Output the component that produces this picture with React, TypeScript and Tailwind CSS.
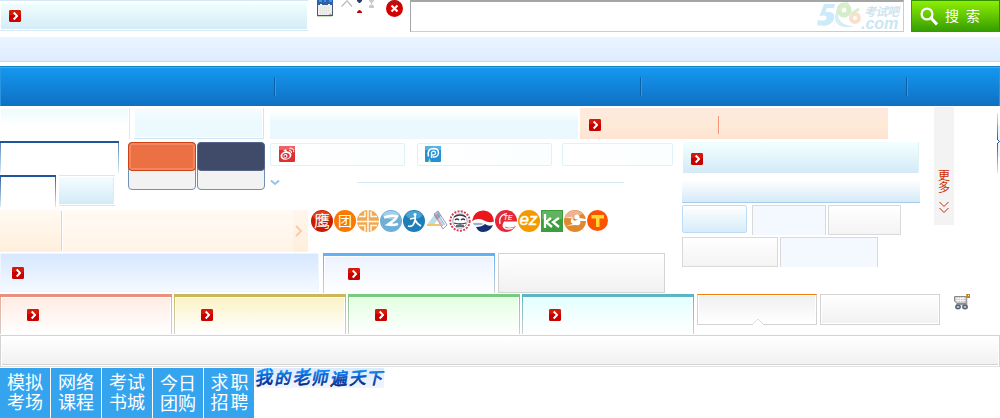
import React from "react";

const CJK = "font-['Liberation_Sans','Noto_Sans_CJK_SC',sans-serif]";

function Arrow({ className = "" }: { className?: string }) {
  return (
    <svg className={`h-3 w-3 shrink-0 ${className}`} viewBox="0 0 12 12">
      <rect width="12" height="12" rx="1.5" fill="#c90000" />
      <path d="M0 1.5Q0 0 1.5 0h9Q12 0 12 1.5V5H0z" fill="#dd2a0c" opacity=".6" />
      <path d="M4.7 2.5 8 5.9 4.7 9.5" fill="none" stroke="#fff" strokeWidth="2" />
    </svg>
  );
}

function Calendar() {
  return (
    <svg className="ml-[9px] h-[17px] w-4 shrink-0" viewBox="0 0 16 17">
      <path d="M0 4h16v12H0z" fill="#54566c" />
      <path d="M1 5h14v7l-3 3H1z" fill="#eeeeee" />
      <path d="M0 0h16v4.6H0z" fill="#2862b0" />
      <path d="M2 0h3v2H2zM7 0h2v2H7zM12 0h3v2h-3z" fill="#4493da" />
      <path d="M3 4.500h2M11 4.500h2" stroke="#fff" />
      <path d="M3 8h10M3 10.500h10M3 13h8" stroke="#dadada" strokeDasharray="1 1" />
      <path d="M12.500 14.500 15 12v2.500z" fill="#fff" />
      <path d="M0 16.500h15" stroke="#c8dcc0" />
    </svg>
  );
}

function SortMarks() {
  return (
    <svg className="ml-2 h-4 w-[34px] shrink-0" viewBox="0 0 34 16">
      <path d="M.5 6.500 6 .8l5 5.700" fill="none" stroke="#b9b9b9" strokeWidth="1.200" />
      <path d="M16 0h5v1l-2 2h-1l-2-2z" fill="#263a70" />
      <path d="M16 13v-1l2-2h1l2 2v1z" fill="#c40008" />
      <path d="M28 0h5v1l-2 2v1l2 2v2h-5V6l2-2V3l-2-2z" fill="#cacaca" />
      <path d="M28 4.500h5" stroke="#fff" strokeWidth=".5" />
    </svg>
  );
}

function Close() {
  return (
    <svg className="ml-[11px] h-[17px] w-[17px] shrink-0" viewBox="0 0 17 17">
      <circle cx="8.500" cy="8.500" r="8.500" fill="#d40000" />
      <path d="M1 5a8.500 8.500 0 0 1 15 0Q8.500 2 1 5" fill="#b01518" />
      <path d="m5.500 5.500 6 6m0-6-6 6" stroke="#fff" strokeWidth="2.200" />
    </svg>
  );
}

function Logo() {
  return (
    <div className="flex h-7">
      <svg className="h-7 w-[44px]" viewBox="0 0 44 28">
        <path d="M7 2h11l-1 4h-7l-1.500 4c7-1 10 2 8.500 7C15 23 9 25 0 23l1-5c5 1 8 1 8.500-2 .5-3-3-3-7-2z" fill="#cdeaf8" />
        <path d="M21 14c1 6 7 10 16 10-8 3-20 1-19-10 1-8 7-13 15-12-7 2-12 6-12 12z" fill="#d6eef3" />
        <circle cx="27" cy="8" r="5" fill="none" stroke="#d3edc9" strokeWidth="5" />
        <circle cx="38" cy="16" r="4" fill="none" stroke="#fadfcd" strokeWidth="4" />
        <path d="m21 8 10-7M34 12l8-5" stroke="#dceecb" strokeWidth="3" />
      </svg>
      <div className={`w-[42px] pt-1 font-bold italic ${CJK}`}>
        <div className="pl-[3px] text-[12px] leading-[13px] tracking-[-0.5px] whitespace-nowrap text-[#cfe4ed]">考试吧</div>
        <div className="text-[16px] leading-[10px] whitespace-nowrap text-[#c9e6f4]">.com</div>
      </div>
    </div>
  );
}

function Header() {
  return (
    <div className="flex h-[37px] items-start">
      <div className="flex h-[31px] w-[308px] shrink-0 flex-col justify-between border-y border-[#d5e9f5]">
        <div className="mx-px mt-[2px] flex h-[26px] items-center bg-linear-to-b from-[#f0ffff] to-[#d5ebf7] pl-2">
          <Arrow />
        </div>
      </div>
      <Calendar />
      <SortMarks />
      <Close />
      <div className="ml-[7px] flex h-8 w-[494px] shrink-0 justify-end border border-t-2 border-r-[#ccc] border-b-[#ccc] border-l-[#a5a5a5] border-t-[#a5a5a5]">
        <Logo />
      </div>
      <div className="ml-[7px] flex h-8 w-[89px] shrink-0 items-center border border-t-[#319100] border-r-[#348900] border-b-[#369f00] border-l-[#369f00] bg-linear-to-b from-[#8def00] to-[#359e00]">
        <svg className="ml-2 h-[19px] w-[18px]" viewBox="0 0 18 19" fill="none" stroke="#fff">
          <circle cx="7" cy="7" r="5.400" strokeWidth="2.300" />
          <path d="m11 11 6 6.500" strokeWidth="3" />
        </svg>
        <span className={`ml-[7px] text-[14px] leading-none tracking-[7px] whitespace-nowrap text-white ${CJK}`}>搜索</span>
      </div>
    </div>
  );
}

function Divider({ className }: { className: string }) {
  return <div className={`h-[19px] w-[2px] border-l border-[#0960a5] bg-[#2f9aeb] ${className}`} />;
}

function Nav() {
  return (
    <div className="mt-1 flex h-10 items-center border-t border-[#1783c7] bg-linear-to-b from-[#1598f1] to-[#0f70c2] shadow-[inset_0_1px_0_#43a9e9,inset_1px_0_0_#2a96df,inset_-1px_0_0_#2a96df]">
      <Divider className="ml-[274px]" />
      <Divider className="ml-[364px]" />
      <Divider className="ml-[264px]" />
    </div>
  );
}

function TopPanels() {
  return (
    <div className="flex h-[35px] items-start pt-[2px]">
      <div className="h-[31px] w-[130px] shrink-0 border-r border-[#d8ecf3] pt-px pr-px pl-px">
        <div className="h-[18px] bg-linear-to-b from-[#effafb] to-white" />
      </div>
      <div className="ml-1 h-[31px] w-[130px] shrink-0 border-r border-b border-[#cfe7f1] p-px">
        <div className="h-full bg-linear-to-b from-[#f5fcff] to-[#ecfaff] to-40%" />
      </div>
      <div className="mt-[2px] ml-[6px] h-[29px] w-[308px] shrink-0 bg-linear-to-b from-white to-[#ebf9fe] to-40%" />
      <div className="ml-[2px] flex h-[31px] w-[308px] shrink-0 items-center bg-linear-to-b from-[#ffe9e0] via-[#feead8] to-[#ffe3d2] pt-[2px] pl-[9px]">
        <Arrow />
        <div className="ml-[117px] h-[18px] w-[2px] border-l border-[#f19576] bg-[#fff0e6]" />
      </div>
    </div>
  );
}

function LeftTabs() {
  return (
    <div className="w-[128px] shrink-0">
      <div className="h-8 w-[119px] border-t-2 border-[#1d5799] bg-linear-to-b from-[#5785b8] to-[#dceef7] px-px">
        <div className="h-full bg-white" />
      </div>
      <div className="mt-[2px] flex">
        <div className="h-8 w-14 border-t-2 border-[#1d5799] bg-linear-to-b from-[#2f649f] to-[#dceef7] px-px">
          <div className="h-full bg-white" />
        </div>
        <div className="ml-[3px] h-[31px] w-14 border-y border-[#d3e9f4] py-px">
          <div className="h-[27px] w-[55px] border-r border-[#d8edf6] bg-linear-to-b from-[#f3fdff] to-[#d3ebf7]" />
        </div>
      </div>
    </div>
  );
}

function Swatches() {
  return (
    <div className="mt-px flex w-[142px] shrink-0 items-start gap-px">
      <div className="h-12 w-[68px] rounded-[4px] border border-[#718eb3] bg-[#f2f2f2]">
        <div className="-mx-px -mt-px h-[29px] rounded-[4px] border border-[#cf4013] bg-[#eb7044] shadow-[inset_0_0_0_2px_#f08760]" />
      </div>
      <div className="h-12 w-[68px] rounded-[4px] border border-[#718eb3] bg-[#f2f2f2]">
        <div className="-mx-px -mt-px h-[29px] rounded-[4px] border border-[#58658a] bg-[#404b69]" />
      </div>
    </div>
  );
}

function Weibo() {
  return (
    <svg className="h-4 w-4" viewBox="0 0 16 16">
      <rect width="16" height="16" rx="1" fill="#dd3035" />
      <path d="M0 0h16v4H0z" fill="#ed6265" />
      <ellipse cx="7" cy="9.500" rx="5.500" ry="4.200" fill="#fff" transform="rotate(-12 7 9.500)" />
      <ellipse cx="7" cy="9.800" rx="3.700" ry="2.800" fill="#dd3035" />
      <circle cx="6.500" cy="10" r="2" fill="#fff" />
      <circle cx="6.300" cy="10.200" r="1" fill="#b01018" />
      <path d="M10 4.500q3-.5 2.600 2.500M10.500 2.200q4.500-.5 4.300 4" fill="none" stroke="#fff" />
      <path d="m4 5 3-2 1 3z" fill="#fff" />
    </svg>
  );
}

function Pengyou() {
  return (
    <svg className="h-4 w-4" viewBox="0 0 16 16">
      <rect width="16" height="16" rx="1" fill="#2292d5" />
      <path d="M0 0h16v4H0z" fill="#57b1e5" />
      <path d="M3.500 10.500Q1.500 3 8.500 2.500q5 0 5 4.500-.5 4.500-6 4" fill="none" stroke="#fff" strokeWidth="1.500" />
      <path d="M6.500 12V6.500Q7 5.200 8.700 5.200q2 .2 1.800 2T7 9" fill="none" stroke="#fff" strokeWidth="1.300" />
      <path d="m3 16 1.500-4L6 16z" fill="#a6df70" />
    </svg>
  );
}

function Share({ children, className }: { children?: React.ReactNode; className: string }) {
  return (
    <div className={`flex h-[23px] items-start rounded-[2px] border border-[#def2fa] bg-linear-to-r from-white to-[#fafeff] pt-[2px] ${className}`}>
      {children}
    </div>
  );
}

function MiddleTools() {
  return (
    <div className="w-[403px] shrink-0 pt-[2px]">
      <div className="flex">
        <Share className="w-[135px] pl-2"><Weibo /></Share>
        <Share className="ml-3 w-[135px] pl-[7px]"><Pengyou /></Share>
        <Share className="ml-[10px] w-[111px]" />
      </div>
      <div className="mt-3 flex items-start">
        <svg className="mt-[1px] h-[7px] w-[10px]" viewBox="0 0 10 7" fill="none" stroke="#9bc3ea" strokeWidth="2">
          <path d="m1 1.500 4 3.500 4-3.500" />
        </svg>
        <div className="mt-[4px] ml-[77px] h-px w-[267px] bg-[#d3e9f4]" />
      </div>
    </div>
  );
}

const glyph = { fontFamily: "'Liberation Sans','Noto Sans CJK SC',sans-serif", textAnchor: "middle" as const };

function Badges() {
  const svg = "h-[22px] w-[22px] shrink-0";
  return (
    <div className="ml-[3px] flex gap-px">
      <svg className={svg} viewBox="0 0 22 22">
        <circle cx="11" cy="11" r="11" fill="#c91b00" />
        <ellipse cx="11" cy="6" rx="9" ry="5" fill="#e0401c" />
        <text x="11" y="16.800" fontSize="16" fill="#fff" {...glyph}>鹰</text>
      </svg>
      <svg className={svg} viewBox="0 0 22 22">
        <circle cx="11" cy="11" r="11" fill="#fb7900" />
        <text x="11" y="16" fontSize="14" fill="#fff" {...glyph}>团</text>
      </svg>
      <svg className={svg} viewBox="0 0 22 22">
        <circle cx="11" cy="11" r="11" fill="#f2a853" />
        <path d="M11 0v22M0 11.500h22M2 6.500h6v-5m12 5h-6v-5M2 15.500h6v6m12-6h-6v6" fill="none" stroke="#fffaf0" strokeWidth="1.500" />
      </svg>
      <svg className={svg} viewBox="0 0 22 22">
        <circle cx="11" cy="11" r="11" fill="#6dafd7" />
        <ellipse cx="11" cy="5" rx="8" ry="4" fill="#a3cee7" />
        <path d="M4 7.500q8-3 13-1-1 3-9 8 5 1 10-.5" fill="none" stroke="#fff" strokeWidth="2.600" />
      </svg>
      <svg className={svg} viewBox="0 0 22 22">
        <circle cx="11" cy="11" r="11" fill="#1c7fba" />
        <ellipse cx="11" cy="5" rx="8" ry="4" fill="#4ca2d0" />
        <path d="M12 4q1 7-2 11-2 2-5 1M12 10q2 4 6 6M7 9l5-1" fill="none" stroke="#fff" strokeWidth="1.700" />
        <circle cx="12" cy="4.500" r="1.500" fill="#fff" />
      </svg>
      <svg className={svg} viewBox="0 0 22 22">
        <path d="M1 15 10 2l3 5-5 8z" fill="#b9dfe8" />
        <path d="M1 15h14" stroke="#edc86a" strokeWidth="2" />
        <path d="m8 4 4-3 9 14-4 4z" fill="#fff" stroke="#999eb6" />
        <path d="m9.500 5 7 11" stroke="#efa7bc" strokeWidth="2" />
        <path d="m11.500 4 7 11" stroke="#8ccdf0" strokeWidth="1.500" />
        <path d="m8 5 4-4 3 5-4 4z" fill="#7c7898" opacity=".55" />
      </svg>
      <svg className={svg} viewBox="0 0 22 22">
        <circle cx="11" cy="11" r="9.700" fill="#fff" stroke="#cf4251" strokeWidth="2" strokeDasharray="2 1.300" />
        <circle cx="11" cy="11" r="7.200" fill="#fff" stroke="#8c8ca5" strokeWidth=".8" />
        <path d="M5 7q6-4 12 0M6 10q2-2 4 0m2 0q2-2 4 0M5 13q6 2 12 0M7 16h8" stroke="#363650" strokeWidth="1.300" fill="none" />
      </svg>
      <svg className={svg} viewBox="0 0 22 22">
        <circle cx="11" cy="11" r="10.500" fill="#fff" />
        <path d="M0 11Q2 0 12 .5q9 1 10 11-5 2-10-1-6-3-12 .5" fill="#ea171c" />
        <path d="M4 17q6 0 9-3 4 3 8 1-3 7-10 7-5 0-7-5" fill="#142f75" />
        <path d="M1 13q7-1 11 1-5 2-10 1" fill="#9ab2cb" />
      </svg>
      <svg className={svg} viewBox="0 0 22 22">
        <circle cx="11" cy="11" r="11" fill="#e62836" />
        <path d="M9 11.500h13v4q-7 4-12 1 0 3 10 1-6 4-11 1-3-2 0-7" fill="#fff" />
        <path d="M5 14Q3 5 12 3.500" fill="none" stroke="#fff" strokeWidth="1.200" />
        <text x="13" y="10" fontSize="7" fontWeight="bold" fontStyle="italic" fill="#ffe0e0" {...glyph}>TE</text>
      </svg>
      <svg className={svg} viewBox="0 0 22 22">
        <circle cx="11" cy="11" r="11" fill="#f49a00" />
        <text x="10.500" y="15" fontSize="17" fontStyle="italic" fill="#fff" stroke="#fff" strokeWidth=".5" {...glyph}>ez</text>
      </svg>
      <svg className={svg} viewBox="0 0 22 22">
        <path d="M0 0h22v22H0z" fill="#3c9e3c" />
        <path d="M1 1h20v8H1z" fill="#62b35e" />
        <path d="M4 4v14M10 8l-5 4 6 5M18 8l-6 4 6 5" fill="none" stroke="#fff" strokeWidth="2.300" />
      </svg>
      <svg className={svg} viewBox="0 0 22 22">
        <circle cx="11" cy="11" r="11" fill="#df892f" />
        <path d="M1 5Q11-4 19 4q-6 1-8 5l-10-1z" fill="#eeb391" />
        <path d="M1 8h7q-3 4 1 6l-8 2 10-1q7 1 5-4h6V9l-7-1q-5 6-7-1z" fill="#fff" />
        <circle cx="13" cy="7" r="2.500" fill="#fff" />
      </svg>
      <svg className={svg} viewBox="0 0 22 22">
        <circle cx="10.500" cy="10.500" r="10.500" fill="#ff5200" />
        <path d="M4.500 5h12.500v3.500H12.500V17H9V8.500H4.500z" fill="#ffda32" />
      </svg>
    </div>
  );
}

function PeachRow() {
  return (
    <div className="flex h-[43px] items-start">
      <div className="h-[42px] w-[61px] shrink-0 bg-linear-to-b from-[#fffaf2] to-[#ffefdc]" />
      <div className="mt-px h-10 w-[2px] shrink-0 border-l border-[#f2cfb5] bg-white" />
      <div className="h-[42px] w-[230px] shrink-0 bg-linear-to-b from-[#fffaf4] to-[#fff4e7]" />
      <div className="flex h-[42px] w-[15px] shrink-0 items-center bg-linear-to-b from-[#fff6ec] to-[#ffefdc]">
        <svg className="ml-[2px] h-3 w-2" viewBox="0 0 8 12" fill="none" stroke="#f5cbb0" strokeWidth="2">
          <path d="m1 1 5 5-5 5" />
        </svg>
      </div>
      <Badges />
    </div>
  );
}

function Tab({ edge, line, fill, pad }: { edge: string; line: string; fill: string; pad: string }) {
  return (
    <div className={`h-10 w-[172px] shrink-0 border-t-[3px] bg-linear-to-b to-[#d0d0d0] px-px ${edge} ${line}`}>
      <div className="h-full bg-white px-px pt-px">
        <div className={`h-full bg-linear-to-b to-white ${fill} ${pad}`}>
          <Arrow />
        </div>
      </div>
    </div>
  );
}

function BlueTabs() {
  return (
    <div className="flex h-[41px] items-start">
      <div className="h-[39px] w-[319px] shrink-0 border border-[#f0f5fc] bg-linear-to-b from-[#d6e7ff] to-[#f5faff] pt-[13px] pl-[11px]">
        <Arrow />
      </div>
      <div className="ml-1">
        <Tab edge="border-[#65b0f4]" line="from-[#65b0f4]" fill="from-[#edf3ff]" pad="pt-[11px] pl-[23px]" />
      </div>
      <div className="ml-[3px] h-10 w-[167px] border border-[#d3d3d3] bg-linear-to-b from-white to-[#f1f1f1]" />
    </div>
  );
}

function RightBoxes() {
  return (
    <div className="w-[252px] shrink-0 pt-px">
      <div className="ml-px flex h-[31px] w-[236px] items-center border-r border-[#e2f1fa] bg-linear-to-b from-[#f3ffff] to-[#d3eaf7] pt-[2px] pl-2">
        <Arrow />
      </div>
      <div className="mt-[7px] h-[23px] w-[238px] border-b border-[#a7cceb] bg-linear-to-b from-white to-[#d4eaf7]" />
      <div className="mt-[2px] flex items-start">
        <div className="h-7 w-[65px] rounded-[2px] border border-[#bddcf8] bg-linear-to-b from-white to-[#d6ecf9]" />
        <div className="ml-[5px] h-[30px] w-[74px] border border-b-0 border-[#d9d9d9] bg-[#f4f8ff]" />
        <div className="ml-[2px] h-[30px] w-[73px] border border-[#d9d9d9] bg-linear-to-b from-white to-[#f3f4f3]" />
      </div>
      <div className="mt-[2px] flex gap-[2px]">
        <div className="h-[30px] w-24 border border-[#d9d9d9] bg-linear-to-b from-white to-[#f3f4f3]" />
        <div className="h-[30px] w-[98px] border border-b-0 border-[#d9d9d9] bg-[#f4f8ff]" />
      </div>
    </div>
  );
}

function MoreRail() {
  return (
    <div className={`mt-px flex h-[118px] w-5 shrink-0 flex-col items-center bg-[#f3f3f3] pt-[63px] text-[12px] leading-[12px] text-[#cc2a00] ${CJK}`}>
      <span>更</span>
      <span>多</span>
      <svg className="mt-[7px] h-3 w-[10px]" viewBox="0 0 10 12" fill="none" stroke="#cc2a00">
        <path d="m.5 1 4.500 4.500L9.500 1M.5 7 5 11.500 9.500 7" />
      </svg>
    </div>
  );
}

function EdgeMark() {
  return (
    <svg className="mt-[7px] ml-auto h-[60px] w-[3px]" viewBox="0 0 3 60">
      <defs>
        <linearGradient id="edge" x2="0" y2="60" gradientUnits="userSpaceOnUse">
          <stop stopColor="#d6e7f8" />
          <stop offset=".45" stopColor="#1e5caa" />
          <stop offset=".6" stopColor="#3976bc" />
          <stop offset="1" stopColor="#d5e5f5" />
        </linearGradient>
      </defs>
      <path d="M1 12h2v32H1z" fill="#eaf6ff" />
      <path d="M0 0h1v27H0zM0 30h1v30H0z" fill="url(#edge)" />
      <path d="m.5 26.500 2 2-2 2" fill="none" stroke="#174f91" />
    </svg>
  );
}

function Cart() {
  return (
    <svg className="ml-[14px] h-4 w-4" viewBox="0 0 16 16">
      <path d="M.5 2.500h12v7H3L.5 7z" fill="#c9c9cc" stroke="#89898e" />
      <path d="M2 4.500h10M2 6.500h10M4 3v5M6.500 3v5M9 3v5" stroke="#fff" strokeWidth=".7" />
      <path d="M12.500 2.500v8H2" fill="none" stroke="#999" strokeWidth="1.500" />
      <path d="M12 0h4v4h-3z" fill="#cc7d29" />
      <path d="M14 1h1v1h-1z" fill="#fff4c0" />
      <ellipse cx="4" cy="13" rx="2.200" ry="1.700" fill="#bec7dc" stroke="#596278" strokeWidth="1.500" />
      <ellipse cx="11" cy="13" rx="2.200" ry="1.700" fill="#bec7dc" stroke="#596278" strokeWidth="1.500" />
    </svg>
  );
}

function ColorTabs() {
  const pad = "pt-[11px] pl-[25px]";
  return (
    <div className="flex h-[41px] items-start">
      <div className="flex gap-[2px]">
        <Tab edge="border-[#e7917f]" line="from-[#efa78d]" fill="from-[#ffece4]" pad={pad} />
        <Tab edge="border-[#cbb85b]" line="from-[#cbb85b]" fill="from-[#fbf3c7]" pad={pad} />
        <Tab edge="border-[#77ca7e]" line="from-[#77ca7e]" fill="from-[#e3ffe2]" pad={pad} />
        <Tab edge="border-[#5bb5c4]" line="from-[#5bb5c4]" fill="from-[#e5ffff]" pad={pad} />
      </div>
      <div className="ml-[3px] flex h-[31px] w-[120px] items-end justify-center border border-t-[#f57b0b] border-r-[#d3d3d3] border-b-[#d3d3d3] border-l-[#d3d3d3] bg-linear-to-b from-[#f0f0f0] to-white shadow-[inset_0_0_0_1px_white]">
        <svg className="mr-[-2px] -mb-px h-[7px] w-3" viewBox="0 0 12 7">
          <path d="m0 7 6-6 6 6z" fill="#fff" />
          <path d="m.5 6.500 5.500-5.500 5.500 5.500" fill="none" stroke="#c6c6c6" strokeDasharray="1 .5" />
        </svg>
      </div>
      <div className="ml-[3px] h-[31px] w-[120px] border border-[#d3d3d3] bg-linear-to-b from-white to-[#f1f1f1] shadow-[inset_0_0_0_1px_white]" />
      <Cart />
    </div>
  );
}

const tiles = [
  { lines: ["模拟", "考场"], look: "pt-[5px]" },
  { lines: ["网络", "课程"], look: "pt-[5px]" },
  { lines: ["考试", "书城"], look: "pt-[5px]" },
  { lines: ["今日", "团购"], look: "pt-[6px]" },
  { lines: ["求职", "招聘"], look: "pt-[5px] pl-[3px] tracking-[2px]" },
];

const brush = [
  { c: "我", x: 8, y: 16, r: -8, s: 18 },
  { c: "的", x: 27, y: 16, r: -4, s: 16 },
  { c: "老", x: 46, y: 16, r: -8, s: 18 },
  { c: "师", x: 64, y: 16, r: -3, s: 17 },
  { c: "遍", x: 83, y: 17, r: -4, s: 17 },
  { c: "天", x: 102, y: 16, r: -5, s: 17 },
  { c: "下", x: 119, y: 16, r: -2, s: 16 },
];

function Tiles() {
  return (
    <div className="mt-px flex items-start">
      <div className="flex gap-px">
        {tiles.map(({ lines, look }) => (
          <div
            key={lines[0]}
            className={`flex h-[50px] w-[50px] flex-col items-center bg-[#35a4ef] text-[18px] leading-5 whitespace-nowrap text-white ${CJK} ${look}`}
          >
            <span>{lines[0]}</span>
            <span>{lines[1]}</span>
          </div>
        ))}
      </div>
      <svg className="ml-px h-5 w-[129px] overflow-visible bg-linear-to-b from-[#dcebfc] to-[#f0f5fe]" viewBox="0 0 129 20">
        <defs>
          <linearGradient id="ink" x2="0" y1="1" y2="19" gradientUnits="userSpaceOnUse">
            <stop stopColor="#0a91ff" />
            <stop offset=".5" stopColor="#0754c5" />
            <stop offset="1" stopColor="#001c7b" />
          </linearGradient>
        </defs>
        <g fontFamily="'Noto Sans CJK SC',sans-serif" fontStyle="italic" textAnchor="middle" fill="url(#ink)" stroke="url(#ink)" strokeWidth=".7">
          {brush.map(({ c, x, y, r, s }) => (
            <text key={c} x={x} y={y} fontSize={s} transform={`rotate(${r} ${x} 10)`}>{c}</text>
          ))}
        </g>
      </svg>
    </div>
  );
}

export default function App() {
  return (
    <div className="h-[418px] w-[1000px] overflow-hidden bg-white">
      <Header />
      <div className="h-[25px] border-b border-[#c5d8ef] bg-linear-to-b from-[#ebf5ff] to-[#deecff]" />
      <Nav />
      <div className="flex h-[188px]">
        <div className="w-[934px] shrink-0">
          <TopPanels />
          <div className="flex">
            <div className="w-[682px] shrink-0">
              <div className="flex h-[69px]">
                <LeftTabs />
                <Swatches />
                <MiddleTools />
              </div>
              <PeachRow />
              <BlueTabs />
            </div>
            <RightBoxes />
          </div>
        </div>
        <MoreRail />
        <EdgeMark />
      </div>
      <ColorTabs />
      <div className="h-8 border border-[#d3d3d3] border-b-[#e3e3e3] bg-white p-px">
        <div className="h-[28px] border-b border-[#d3d3d3] bg-linear-to-b from-white to-[#f1f1f1]" />
      </div>
      <Tiles />
    </div>
  );
}
